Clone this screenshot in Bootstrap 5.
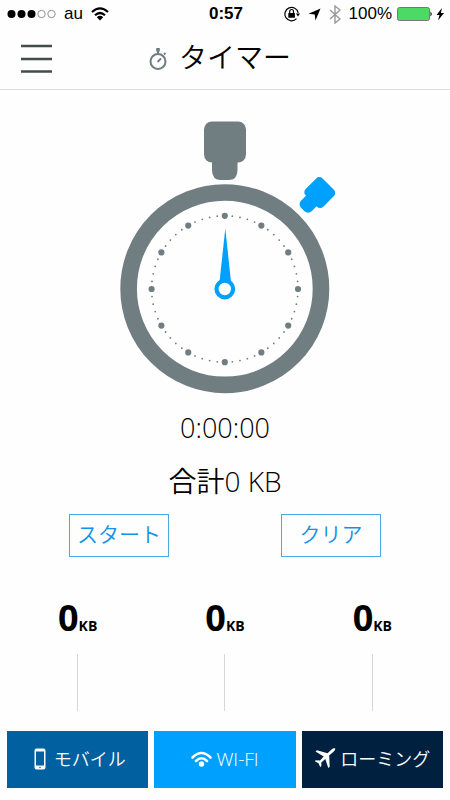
<!DOCTYPE html>
<html lang="ja">
<head>
<meta charset="utf-8">
<meta name="viewport" content="width=device-width, initial-scale=1">
<title>タイマー</title>
<link rel="stylesheet" href="https://cdn.jsdelivr.net/npm/bootstrap@5.3.0/dist/css/bootstrap.min.css">
<style>
  body { font-family: "Open Sans", "Noto Sans CJK JP", sans-serif; font-weight: 300; color: #000; background: #fefefe; }
  svg { display: block; flex: none; }
  .side { flex: 1 1 0; }
  .status-bar { height: 28px; padding: 0 5px 0 7px; font: 400 17px/28px "Liberation Sans", sans-serif; }
  .clock { font-weight: 700; }
  .app-bar { height: 62px; border-bottom: 1px solid #dcdcdc; padding: 0 20px; }
  .app-heading { gap: 12px; padding-right: 10px; }
  .app-title { font-size: 28px; font-weight: 350; line-height: 36px; padding-bottom: 4px; }
  .watch { padding-top: 31px; }
  .reading { font-size: 27px; line-height: 40px; font-weight: 350; padding-top: 13px; }
  .total { font-size: 28px; }
  .outline-btn { width: 100px; height: 43px; border: 1px solid #4aa8e4; border-radius: 0; color: #1292e4; font-size: 21px; font-weight: 350; line-height: 36px; padding: 0 0 4px; }
  .actions { padding: 13px 69px 0; }
  .amount { font-size: 36px; line-height: 40px; font-weight: 700; }
  .unit { font-size: 14px; }
  .counts { padding-bottom: 8px; }
  .rule { width: 1px; height: 57px; background: #d6d6d6; }
  .tabs { gap: 6px; padding-left: 7px; padding-right: 7px; }
  .tab-btn { flex: 1 1 0; height: 57px; border: 0; border-radius: 0; padding: 0 0 2px; color: #fff; font-size: 18px; font-weight: 350; line-height: 28px; }
  .tab-btn:hover { color: #fff; }
  .mobile { background: #0060a0; }
  .wifi { background: #00a0ff; font-size: 19px; font-weight: 300; }
  .roaming { background: #002040; }
</style>
</head>
<body class="min-vh-100 d-flex flex-column">
<div class="status-bar d-flex align-items-center">
  <div class="side d-flex align-items-center gap-2">
    <svg width="49" height="10" viewBox="0 0 49 10"><g fill="#000"><circle cx="4.500" cy="5" r="4"/><circle cx="14.500" cy="5" r="4"/><circle cx="24.500" cy="5" r="4"/></g><g fill="none" stroke="#777" stroke-width=".8"><circle cx="34.500" cy="5" r="3.700"/><circle cx="44.500" cy="5" r="3.700"/></g></svg>
    <span>au</span>
    <svg width="18" height="14" viewBox="0 0 18 14"><path d="M1 5Q9-2.400 17 5M4 8.300Q9 3.700 14 8.300" fill="none" stroke="#000" stroke-width="2.200"/><path d="M5.800 10.200Q9 7.400 12.200 10.200L9 13.500Z"/></svg>
  </div>
  <div class="clock">0:57</div>
  <div class="side d-flex align-items-center justify-content-end">
    <svg class="me-2" width="16" height="16" viewBox="0 0 16 16"><path d="M12.500 12.700A6.700 6.700 0 1 1 14.200 7" fill="none" stroke="#000" stroke-width="1.200"/><path d="M12 7.500h4l-2 3Z"/><rect x="4.300" y="7" width="6.600" height="4.700" rx=".5"/><path d="M5.700 7.300V5.400a1.900 1.900 0 0 1 3.800 0V7.300" fill="none" stroke="#000" stroke-width="1.200"/></svg>
    <svg class="me-2" width="13" height="13" viewBox="0 0 13 13"><path d="M12.500.5 7.500 12.500 6.700 6.500.5 5.700Z"/></svg>
    <svg class="me-2" width="12" height="19" viewBox="0 0 12 19"><path d="M1 5 11 14 6 18V1l5 4L1 14" fill="none" stroke="#999" stroke-width="1.400"/></svg>
    <span class="me-1">100%</span>
    <svg width="49" height="16" viewBox="0 0 49 16"><rect x="1.500" y="1.500" width="32" height="13" rx="2" fill="#4cd964" stroke="#777"/><path d="M34.500 5.500q2.500 2.500 0 5Z"/><path d="M46 2 40.500 9h3l-1.500 5.500 6-7.500h-3.200Z"/></svg>
  </div>
</div>
<header class="app-bar d-flex align-items-center">
  <div class="side">
    <button class="btn p-0 border-0" type="button" aria-label="メニュー"><svg width="33" height="30" viewBox="0 0 33 30"><path d="M1 2h31M1 15h31M1 27.500h31" stroke="#444b4b" stroke-width="2.600"/></svg></button>
  </div>
  <div class="app-heading d-flex align-items-center">
    <svg width="18" height="24" viewBox="0 0 18 24"><circle cx="9" cy="14.500" r="7.500" fill="none" stroke="#6f7c80" stroke-width="2"/><path d="M7.200 1h3.600v3.500h-.8v2H8v-2h-.8Z" fill="#6f7c80"/><path d="m15 7.500 1.500-1.500M8.500 15l3.500-3.500" stroke="#6f7c80" stroke-width="1.800"/></svg>
    <h1 class="app-title m-0">タイマー</h1>
  </div>
  <div class="side"></div>
</header>
<main class="flex-grow-1 d-flex flex-column">
  <div class="watch d-flex justify-content-center">
    <svg width="240" height="274" viewBox="105 121 240 274" role="img" aria-label="ストップウォッチ">
      <g fill="#707d81"><rect x="204" y="121.500" width="42" height="41" rx="8"/><path d="M212 155h25.500v15q0 10-9 10h-7.500q-9 0-9-10Z"/></g>
      <g transform="rotate(45 318 195)" fill="#00a0ff"><rect x="305" y="180" width="25" height="24" rx="4.500"/><rect x="310" y="198" width="15" height="18" rx="5"/></g>
      <g fill="none" stroke="#707d81"><circle cx="224.800" cy="288.700" r="96.200" stroke-width="16.600"/>
      <circle cx="224.800" cy="289" r="73.200" pathLength="60" stroke-width="1.800" stroke-linecap="round" stroke-dasharray="0 1"/>
      <circle cx="224.800" cy="289" r="73.200" pathLength="12" stroke-width="6.200" stroke-linecap="round" stroke-dasharray="0 1"/></g>
      <path d="M225.300 228.500 231 282h-11.500Z" fill="#00a0ff"/>
      <circle cx="224.800" cy="289" r="8.300" fill="#fefefe" stroke="#00a0ff" stroke-width="4.200"/>
    </svg>
  </div>
  <div class="reading text-center">0:00:00</div>
  <div class="reading total text-center">合計0 KB</div>
  <div class="actions d-flex justify-content-between">
    <button class="btn outline-btn" type="button">スタート</button>
    <button class="btn outline-btn" type="button">クリア</button>
  </div>
  <div class="tabs counts d-flex mt-auto">
    <div class="side text-center amount">0<span class="unit">KB</span></div>
    <div class="side text-center amount">0<span class="unit">KB</span></div>
    <div class="side text-center amount">0<span class="unit">KB</span></div>
  </div>
  <div class="tabs d-flex mb-3">
    <div class="side d-flex justify-content-center"><div class="rule"></div></div>
    <div class="side d-flex justify-content-center"><div class="rule"></div></div>
    <div class="side d-flex justify-content-center"><div class="rule"></div></div>
  </div>
</main>
<nav class="tabs d-flex pt-1 pb-2 mb-1">
  <button class="btn tab-btn mobile d-flex align-items-center justify-content-center gap-2" type="button"><svg class="ms-1" width="12" height="22" viewBox="0 0 12 22"><path fill="#fff" fill-rule="evenodd" d="M2.500.5h7q2 0 2 2v17q0 2-2 2h-7q-2 0-2-2v-17q0-2 2-2ZM2 3.500v14h8v-14Z"/><circle cx="6" cy="19.500" r=".8" fill="#0060a0"/></svg>モバイル</button>
  <button class="btn tab-btn wifi d-flex align-items-center justify-content-center" type="button"><svg class="me-1" width="21" height="16" viewBox="0 0 21 16"><path d="M1.500 6.500Q10.500-2.500 19.500 6.500M5 10Q10.500 4.500 16 10" fill="none" stroke="#fff" stroke-width="2.500" stroke-linecap="round"/><circle cx="10.500" cy="13" r="2.700" fill="#fff"/></svg>WI-FI</button>
  <button class="btn tab-btn roaming d-flex align-items-center justify-content-center" type="button"><svg class="me-1" width="22" height="21" viewBox="0 0 22 21"><path fill="#fff" d="M21.300.6Q19.500-.2 17.300 1.800L13.500 5.200 3 2.200 1.500 3.500 9.700 8.600 6 12.600 1.800 12.200.8 13.300 4.500 15.200 6.200 18.900 7.400 17.900 7.300 14.500 11.300 11.100 14.300 20 15.700 18.700 15.200 7.400 19.500 3.800Q21.500 2 21.300.6Z"/></svg>ローミング</button>
</nav>
<script src="https://cdn.jsdelivr.net/npm/bootstrap@5.3.0/dist/js/bootstrap.bundle.min.js"></script>
</body>
</html>
